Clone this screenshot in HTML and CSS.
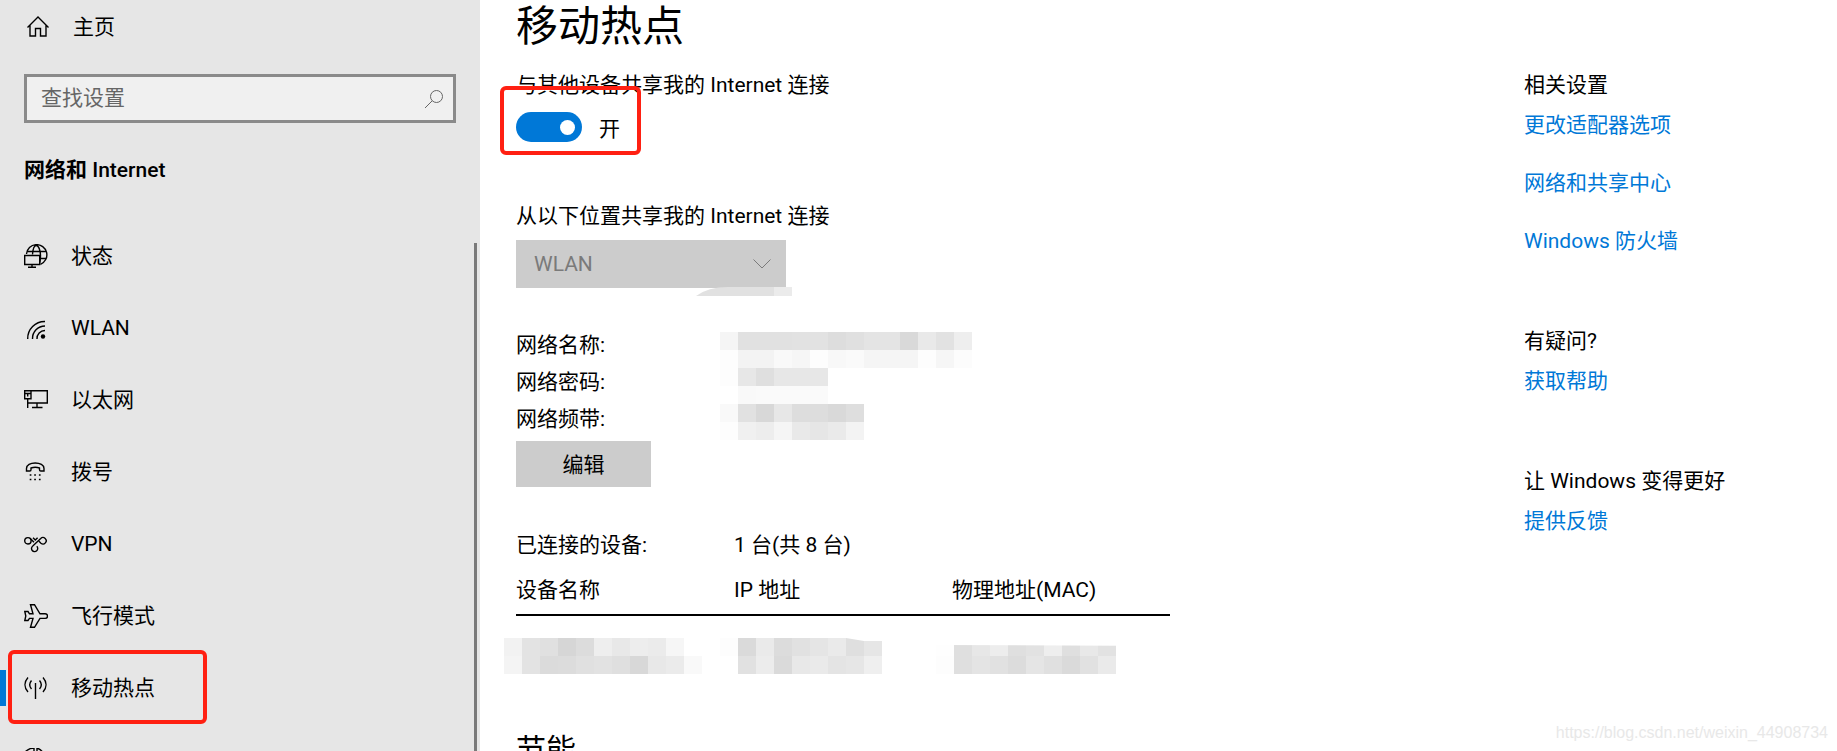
FILE: index.html
```html
<!DOCTYPE html>
<html lang="zh-CN">
<head>
    <meta charset="UTF-8">
    <meta name="viewport" content="width=device-width, initial-scale=1.0">
    <title>设置 - 移动热点</title>
    <link rel="stylesheet" href="styles.css">
</head>
<body>
    <div class="settings">
        <aside class="sidebar">
            <a class="home" href="#home">
                <svg class="icon" viewBox="0 0 24 24"><path d="M1.5 12.500 12 2l10.500 10.500M4 10.500V21h5.500v-7.500h5V21H20V10.500"/></svg>
                <span>主页</span>
            </a>
            <div class="search">
                <input type="text" id="search" placeholder="查找设置" aria-label="查找设置">
                <svg class="search-icon" viewBox="0 0 20 20"><circle cx="12.500" cy="7.500" r="6"/><path d="M8.200 11.800 1 19"/></svg>
            </div>
            <h2 class="section-title">网络和 <span>Internet</span></h2>
            <nav class="nav">
                <a href="#status">
                    <svg class="icon" viewBox="0 0 24 24"><path d="M2.500 10A10.200 10.200 0 1 1 16.500 20.300M3.500 7.500h18M16 14.500h6M8.500 10.500C8.800 6 10 1.500 12.300 1.500s4.200 5 4.200 10c0 4-.5 7-1.500 8.500"/><path class="screen" d="M.7 11.500h15v9H.7z"/><path d="M8 20.500v3M4 23.300h8"/></svg>
                    <span>状态</span>
                </a>
                <a href="#wlan">
                    <svg class="icon" viewBox="0 0 24 24"><path d="M3.700 23A17 17 0 0 1 21 5.500M8.500 23A12.500 12.500 0 0 1 21 10M13 23a8 8 0 0 1 8-8.500"/><circle class="solid" cx="19" cy="20.500" r="2.200"/></svg>
                    <span>WLAN</span>
                </a>
                <a href="#ethernet">
                    <svg class="icon" viewBox="0 0 24 24"><path d="M7 2.700h16.300V15H4M.7 2.700H7v8H.7zM.7 5.500H7M3.700 5.500v3M3.700 11v9M13 15v4.500M8 19.500h10.500"/></svg>
                    <span>以太网</span>
                </a>
                <a href="#dialup">
                    <svg class="icon" viewBox="0 0 24 24"><path d="M2.500 11h3.200c.8 0 1.300-.5 1.300-1.200V8c2.500-.8 6-.8 8.500 0v1.800c0 .7.500 1.200 1.300 1.200H20V8.500C20 5 16 3 11.200 3S2.500 5 2.500 8.500z"/><path class="dots" d="M6.500 15h.1M11 15h.1M15.700 15h.1M6.500 19.500h.1M11 19.500h.1M15.700 19.500h.1"/></svg>
                    <span>拨号</span>
                </a>
                <a href="#vpn">
                    <svg class="icon" viewBox="0 0 24 24"><circle cx="3.900" cy="8.800" r="3.200"/><path d="M6 6.300l4 4M9 5.700l2.300 2.300 2.300-2.300M12.800 14.300a3.100 3.100 0 1 1-4-.3L16.700 6.500a3.200 3.200 0 1 1 .2 4.700L15 9.300"/></svg>
                    <span>VPN</span>
                </a>
                <a href="#airplane">
                    <svg class="icon" viewBox="0 0 24 24"><path d="M6.500 .7h4L16 9.800h5.200a2.300 2.300 0 0 1 0 4.600H16l-5.500 8.900h-4l2.500-8.900H5.500L4 16.500H.8L1.800 12 .8 7.500H4l1.500 2.300H9z"/></svg>
                    <span>飞行模式</span>
                </a>
                <a class="active" href="#hotspot">
                    <svg class="icon" viewBox="0 0 24 24"><path d="M11.500 7v16M4 1.500C0 6 0 11.500 4 16M19 1.500c4 4.500 4 10 0 14.500M7.500 4.500c-2.300 2.700-2.300 5.800 0 8.500M15.500 4.500c2.300 2.700 2.300 5.800 0 8.500"/></svg>
                    <span>移动热点</span>
                </a>
                <a href="#usage" aria-label="数据使用量">
                    <svg class="icon" viewBox="0 0 24 24"><path d="M10 0a12 12 0 1 0 12 14M10 0v12l8 7M13 0v8l8 4A12 12 0 0 0 13 0"/></svg>
                </a>
            </nav>
        </aside>

        <main class="content">
            <h1>移动热点</h1>
            <label class="label" for="share">与其他设备共享我的 Internet 连接</label>
            <div class="toggle">
                <input type="checkbox" id="share" role="switch" checked>
                <span>开</span>
            </div>

            <label class="label" for="source">从以下位置共享我的 Internet 连接</label>
            <div class="select">
                <select id="source" disabled>
                    <option>WLAN</option>
                </select>
                <svg class="chevron" viewBox="0 0 18 10"><path d="m.5.5 8.500 8.500L17.500.5"/></svg>
                <svg class="smudge" viewBox="0 0 96 9"><path fill="#e1e1e1" d="M0 9Q12 0 32 0h46v9z"/><path fill="#ebebeb" d="M78 0h18v9H78z"/></svg>
            </div>

            <div class="network">
                <dl>
                    <dt>网络名称:</dt>
                    <dt>网络密码:</dt>
                    <dt>网络频带:</dt>
                </dl>
                <div class="mosaic" data-rows="f5 e1 e1 e1 e2 e2 dd e0 e4 e4 d9 e9 e2 ee/fd f3 f3 f9 f6 fd f8 fa f5 f5 f5 fd f6 fc/fd e7 df e7 e7 e7/ff f9 fa fa fa fa/f9 e1 d8 e7 dd dd d9 de/fd f0 ed f5 e9 e6 ea f3"></div>
            </div>
            <button class="edit" type="button">编辑</button>

            <div class="connected">
                <span>已连接的设备:</span>
                <span>1 台(共 8 台)</span>
            </div>
            <table class="devices">
                <thead>
                    <tr>
                        <th>设备名称</th>
                        <th>IP 地址</th>
                        <th>物理地址(MAC)</th>
                    </tr>
                </thead>
                <tbody>
                    <tr>
                        <td><div class="mosaic" data-rows="f2 e3 e0 d6 dc ee e8 ed eb f6/f4 e3 db dc e0 e2 df d8 e8 eb f9"></div></td>
                        <td><div class="mosaic ip" data-rows="fd da ea dc e1 e5 ea df e6/ff e1 ec da e8 ea e4 e6 ef"></div></td>
                        <td><div class="mosaic mac" data-rows="fe df e7 ed df e2 ee df e8 e2/fd df e4 e1 dc e5 e0 da e1 ea"></div></td>
                    </tr>
                </tbody>
            </table>
            <h2 class="power">节能</h2>
        </main>

        <aside class="related">
            <section>
                <h3>相关设置</h3>
                <a href="#adapter">更改适配器选项</a>
                <a href="#sharing">网络和共享中心</a>
                <a href="#firewall">Windows 防火墙</a>
            </section>
            <section>
                <h3>有疑问?</h3>
                <a href="#help">获取帮助</a>
            </section>
            <section>
                <h3>让 Windows 变得更好</h3>
                <a href="#feedback">提供反馈</a>
            </section>
        </aside>
        <div class="watermark">https://blog.csdn.net/weixin_44908734</div>
    </div>

    <script>
        // Fill the masked values with grey blocks, one per two-digit shade
        document.querySelectorAll('.mosaic').forEach((box) => {
            box.dataset.rows.split('/').forEach((row) => {
                const line = document.createElement('div');
                row.split(' ').forEach((shade) => {
                    const block = document.createElement('i');
                    block.style.background = `#${shade}${shade}${shade}`;
                    line.appendChild(block);
                });
                box.appendChild(line);
            });
        });
    </script>
</body>
</html>
```
FILE: styles.css
```css
:root {
    --accent: #0078d7;
    --mark: #ff2012;
    --grey: #cccccc;
}

*,
*::before,
*::after {
    margin: 0;
    padding: 0;
    box-sizing: border-box;
}

body {
    font-family: Roboto, "Noto Sans CJK SC", sans-serif;
    font-size: 21px;
    line-height: 32px;
    color: #000;
    background: #fff;
}

a {
    color: inherit;
    text-decoration: none;
}

input,
select,
button {
    font: inherit;
    color: inherit;
    border: none;
    border-radius: 0;
    appearance: none;
}

.settings {
    position: relative;
    display: grid;
    grid-template-columns: 480px 1fr 313px;
    height: 100vh;
    overflow: hidden;
}

/* Sidebar */
.sidebar {
    background: #e6e6e6;
}

.icon {
    width: 24px;
    height: 24px;
    flex: none;
    fill: none;
    stroke: #000;
    stroke-width: 1.4;
}

.icon .solid {
    fill: #000;
    stroke: none;
}

.icon .screen {
    fill: #e6e6e6;
}

.icon .dots {
    stroke-width: 1.6;
    stroke-linecap: square;
}

.home {
    display: flex;
    align-items: center;
    gap: 23px;
    height: 54px;
    padding-left: 26px;
}

.search {
    position: relative;
    margin: 20px 24px 0;
}

.search input {
    display: block;
    width: 100%;
    height: 49px;
    padding: 0 48px 2px 14px;
    border: 3px solid #8a8a8a;
    background: #f0f0f0;
}

.search input::placeholder {
    color: #666;
}

.search-icon {
    position: absolute;
    top: 15px;
    right: 12px;
    width: 20px;
    height: 20px;
    fill: none;
    stroke: #666;
}

.section-title {
    margin: 31px 0 34px;
    padding-left: 24px;
    font-size: 21px;
    font-weight: 700;
}

.section-title span {
    font-weight: 500;
}

.nav {
    position: relative;
}

/* Overlay scrollbar thumb */
.nav::after {
    content: "";
    position: absolute;
    top: 23px;
    right: 3px;
    bottom: 0;
    width: 3px;
    background: #7a7a7a;
}

.nav a {
    position: relative;
    display: flex;
    align-items: center;
    gap: 23px;
    height: 72px;
    padding-left: 24px;
}

.nav .active::before {
    content: "";
    position: absolute;
    left: 0;
    width: 6px;
    height: 36px;
    background: var(--accent);
}

.nav .active::after,
.toggle::after {
    content: "";
    position: absolute;
    border: 4px solid var(--mark);
    border-radius: 6px;
}

.nav .active::after {
    top: -2px;
    left: 8px;
    width: 199px;
    height: 74px;
}

/* Content */
.content {
    padding-left: 36px;
}

h1 {
    padding-top: 3px;
    margin-bottom: 18px;
    font-size: 42px;
    font-weight: 400;
    line-height: 48px;
}

.label {
    display: block;
}

.toggle {
    position: relative;
    display: flex;
    align-items: center;
    gap: 17px;
    height: 30px;
    margin: 11px 0 58px;
}

.toggle::after {
    top: -26px;
    left: -16px;
    width: 141px;
    height: 69px;
}

.toggle span {
    padding-top: 4px;
}

.toggle input {
    display: flex;
    align-items: center;
    justify-content: flex-end;
    width: 66px;
    height: 30px;
    padding-right: 7px;
    border-radius: 15px;
    background: var(--accent);
}

.toggle input::before {
    content: "";
    width: 15px;
    height: 15px;
    border-radius: 50%;
    background: #fff;
}

.select {
    position: relative;
    width: 270px;
    margin-top: 8px;
}

.select select {
    display: block;
    width: 100%;
    height: 48px;
    padding-left: 18px;
    background: var(--grey);
    color: #7a7a7a;
    opacity: 1;
}

.chevron {
    position: absolute;
    top: 19px;
    right: 15px;
    width: 18px;
    height: 10px;
    fill: none;
    stroke: #7a7a7a;
}

.smudge {
    position: absolute;
    top: 47px;
    right: -6px;
    width: 96px;
    height: 9px;
}

.network {
    display: flex;
    margin-top: 39px;
}

.network dl {
    width: 204px;
}

.network dt {
    line-height: 37px;
}

.network .mosaic {
    margin-top: 5px;
}

.mosaic div {
    display: flex;
}

.mosaic i {
    width: 18px;
    height: 18px;
}

.edit {
    display: block;
    width: 135px;
    height: 46px;
    margin-top: 1px;
    padding-top: 2px;
    background: var(--grey);
}

.connected {
    display: grid;
    grid-template-columns: 218px 1fr;
    margin-top: 42px;
}

.devices {
    width: 654px;
    margin-top: 7px;
    table-layout: fixed;
    border-collapse: collapse;
}

.devices th {
    height: 47px;
    padding-bottom: 3px;
    border-bottom: 2px solid #000;
    font-weight: 400;
    text-align: left;
}

.devices td {
    padding-top: 22px;
    vertical-align: top;
}

.devices .mosaic {
    margin-left: -12px;
}

.devices .mac {
    margin-left: -16px;
    clip-path: polygon(0 7px, 100% 8px, 100% 100%, 0 100%);
}

.devices .ip {
    margin-left: -14px;
    clip-path: polygon(0 0, 126px 0, 144px 3px, 100% 3px, 100% 100%, 0 100%);
}

.power {
    margin-top: 56px;
    font-size: 30px;
    font-weight: 400;
    line-height: 40px;
}

/* Related links */
.related {
    padding-top: 69px;
}

.related section {
    margin-bottom: 68px;
}

.related h3 {
    font-size: 21px;
    font-weight: 400;
    margin-bottom: 8px;
}

.related a {
    display: block;
    color: var(--accent);
}

.related a + a {
    margin-top: 26px;
}

.watermark {
    position: absolute;
    right: 9px;
    bottom: 6px;
    font-family: "Liberation Sans", Arial, sans-serif;
    font-size: 16px;
    line-height: 24px;
    color: #e8e8e8;
}
```
